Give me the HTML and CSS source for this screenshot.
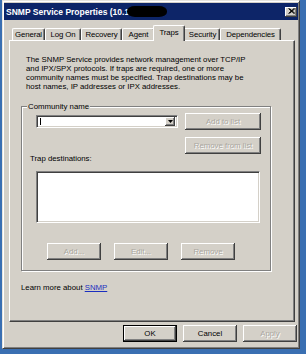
FILE: index.html
```html
<!DOCTYPE html>
<html>
<head>
<meta charset="utf-8">
<link rel="stylesheet" href="styles.css">
</head>
<body>
<div class="window">
  <div class="titlebar">
    <span class="title">SNMP Service Properties (10.1</span>
    <span class="redact"></span>
    <span class="close"><svg width="7" height="6" viewBox="0 0 7 6"><path d="M0.5 0.5 L6 5.5 M1.5 0.5 L7 5.5 M6 0.5 L0.5 5.5 M7 0.5 L1.5 5.5" stroke="#000" stroke-width="1"/></svg></span>
  </div>
  <div class="tabs">
    <div class="tab w-general">General</div>
    <div class="tab w-logon">Log On</div>
    <div class="tab w-recovery">Recovery</div>
    <div class="tab w-agent">Agent</div>
    <div class="tab tab-active w-traps">Traps</div>
    <div class="tab w-security">Security</div>
    <div class="tab w-deps">Dependencies</div>
  </div>
  <div class="panel">
    <p class="desc">The SNMP Service provides network management over TCP/IP<br>and IPX/SPX protocols. If traps are required, one or more<br>community names must be specified. Trap destinations may be<br>host names, IP addresses or IPX addresses.</p>
    <div class="group">
      <span class="legend">Community name</span>
      <div class="row1">
        <div class="combo">
          <span class="caret"></span>
          <span class="drop"><svg width="5" height="3" viewBox="0 0 5 3"><path d="M0 0 H5 L2.5 3 Z" fill="#000"/></svg></span>
        </div>
        <button class="btn btn-wide disabled">Add to list</button>
      </div>
      <div class="row2">
        <button class="btn btn-wide disabled">Remove from list</button>
      </div>
      <span class="label">Trap destinations:</span>
      <div class="listbox"></div>
      <div class="row3">
        <button class="btn disabled">Add...</button>
        <button class="btn disabled">Edit...</button>
        <button class="btn disabled">Remove</button>
      </div>
    </div>
    <p class="learn">Learn more about <a class="link">SNMP</a></p>
  </div>
  <div class="footer">
    <button class="btn btn-default">OK</button>
    <button class="btn">Cancel</button>
    <button class="btn disabled">Apply</button>
  </div>
</div>
</body>
</html>
```
FILE: styles.css
```css
* { box-sizing: border-box; margin: 0; padding: 0; }
html, body { width: 306px; height: 354px; overflow: hidden; }
body {
  background: #3a6fb2;
  font-family: "Liberation Sans", Arial, sans-serif;
  font-size: 7.8px;
  color: #000;
}
.window {
  margin-left: 2px;
  width: 298px;
  height: 349px;
  background: #d4d0c8;
  border: 1px solid;
  border-color: #e6e4de #404040 #404040 #e6e4de;
  box-shadow: inset 1px 1px #fff, inset -1px -1px #808080;
  padding: 2px 1px 1px 1px;
  display: flex;
  flex-direction: column;
}
.titlebar {
  height: 17px;
  background: #0d2568;
  color: #fff;
  display: flex;
  align-items: center;
  padding-left: 2px;
  font-weight: bold;
  font-size: 8.5px;
  white-space: nowrap;
}
.redact {
  width: 40px;
  height: 11px;
  margin-left: -2px;
  background: #000;
  border-radius: 8px / 5px;
}
.close {
  margin-left: auto;
  margin-right: 1px;
  width: 12px;
  height: 10px;
  background: #d4d0c8;
  box-shadow: inset -1px -1px #404040, inset 1px 1px #fff, inset -2px -2px #808080;
  display: flex;
  align-items: center;
  justify-content: center;
  padding-bottom: 1px;
}
.close svg { display: block; }
.tabs {
  display: flex;
  align-items: flex-end;
  height: 20px;
  padding-left: 8px;
}
.tab {
  position: relative;
  height: 12px;
  line-height: 11px;
  text-align: center;
  white-space: nowrap;
  letter-spacing: -0.1px;
  border-left: 1px solid #fff;
  border-top: 1px solid #fff;
  border-right: 1px solid #404040;
  box-shadow: inset -1px 0 #808080;
  border-radius: 2px 2px 0 0;
}
.tab-active {
  height: 16px;
  margin: 0 -2px -1px;
  background: #d4d0c8;
  line-height: 13px;
  z-index: 1;
}
.w-general { width: 33px; }
.w-logon { width: 36px; }
.w-recovery { width: 41px; }
.w-agent { width: 33px; }
.w-traps { width: 32px; }
.w-security { width: 37px; padding-left: 2px; }
.w-deps { width: 61px; }
.panel {
  margin-left: 5px;
  width: 286px;
  height: 282px;
  border: 1px solid;
  border-color: #fff #404040 #404040 #fff;
  box-shadow: inset -1px -1px #808080;
  padding: 14px 0 0 11px;
}
.desc {
  margin-left: 5px;
  line-height: 9px;
  white-space: nowrap;
}
.group {
  margin-top: 15px;
  width: 250px;
  height: 165px;
  border: 1px solid #808080;
  box-shadow: inset 1px 1px #fff, 1px 1px #fff;
  padding-left: 14px;
  display: flex;
  flex-direction: column;
  align-items: flex-start;
}
.legend {
  margin: -5px 0 0 -9px;
  padding: 0 1px;
  line-height: 9px;
  height: 9px;
  background: #d4d0c8;
}
.row1 {
  margin-top: 2px;
  display: flex;
  align-items: center;
  height: 17px;
}
.combo {
  width: 142px;
  height: 13px;
  background: #fff;
  border: 1px solid;
  border-color: #808080 #fff #fff #808080;
  box-shadow: inset 1px 1px #404040, inset -1px -1px #d4d0c8;
  display: flex;
  align-items: center;
  padding: 2px;
}
.caret {
  width: 1px;
  height: 7px;
  margin-left: 1px;
  background: #000;
}
.drop {
  margin-left: auto;
  width: 10px;
  height: 9px;
  background: #d4d0c8;
  box-shadow: inset -1px -1px #404040, inset 1px 1px #fff, inset -2px -2px #808080;
  display: flex;
  align-items: center;
  justify-content: center;
}
.drop svg { display: block; }
.row1 .btn { margin-left: 7px; }
.row2 { margin-top: 7px; margin-left: 149px; display: flex; }
.label {
  margin-left: -6px;
  line-height: 9px;
}
.listbox {
  margin-top: 8px;
  width: 224px;
  height: 52px;
  background: #fff;
  border: 1px solid;
  border-color: #808080 #fff #fff #808080;
  box-shadow: inset 1px 1px #404040, inset -1px -1px #d4d0c8;
}
.row3 {
  margin-top: 20px;
  margin-left: 11px;
  display: flex;
  gap: 13px;
}
.learn {
  margin-top: 12px;
  line-height: 9px;
}
.link { color: #1a2ec0; text-decoration: underline; }
.footer {
  margin-top: 3px;
  padding-right: 1px;
  display: flex;
  justify-content: flex-end;
  gap: 6px;
}
.btn {
  width: 54px;
  height: 17px;
  font-family: "Liberation Sans", Arial, sans-serif;
  font-size: 7.8px;
  color: #000;
  background: #d4d0c8;
  border: none;
  box-shadow: inset -1px -1px #404040, inset 1px 1px #fff, inset -2px -2px #808080;
  white-space: nowrap;
}
.btn-wide { width: 76px; }
.btn-default {
  border: 1px solid #000;
  box-shadow: inset -1px -1px #404040, inset 1px 1px #fff, inset -2px -2px #808080;
}
.disabled {
  color: #aaa7a0;
  text-shadow: 1px 1px #fff;
}
```
